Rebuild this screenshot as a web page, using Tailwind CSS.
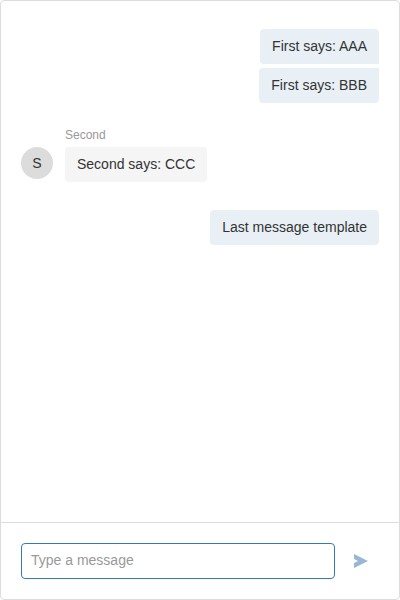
<!DOCTYPE html>
<html lang="en">
<head>
<meta charset="utf-8">
<title>Chat</title>
<script src="https://cdn.jsdelivr.net/npm/@tailwindcss/browser@4"></script>
</head>
<body class="bg-white">
<main class="flex h-[600px] w-[400px] flex-col overflow-hidden rounded border border-[#dcdcdc] bg-white font-['Liberation_Sans',Arial,sans-serif] text-sm leading-[19px] text-[#333]">
  <section class="flex flex-1 flex-col px-5 pt-7">
    <div class="flex flex-col items-end gap-1">
      <div class="rounded-l rounded-tr bg-[#e8f0f6] px-3 py-2">First says: AAA</div>
      <div class="rounded-l rounded-br bg-[#e8f0f6] px-3 py-2">First says: BBB</div>
    </div>
    <div class="mt-6 flex items-end gap-3">
      <div class="mb-[3px] flex size-8 items-center justify-center rounded-full bg-[#dcdcdc]">S</div>
      <div class="flex flex-col items-start">
        <div class="mb-[3px] text-xs leading-[17px] text-[#999]">Second</div>
        <div class="rounded bg-[#f5f5f5] px-3 py-2">Second says: CCC</div>
      </div>
    </div>
    <div class="mt-7 flex justify-end">
      <div class="rounded bg-[#e8f0f6] px-3 py-2">Last message template</div>
    </div>
  </section>
  <form class="flex h-[77px] shrink-0 items-center gap-2.5 border-t border-[#dcdcdc] px-5">
    <input type="text" placeholder="Type a message" class="h-9 w-[314px] rounded border border-[#337ab7] px-[9px] pb-[2px] outline-none placeholder:text-[#999]">
    <button type="button" aria-label="Send" class="flex size-8 items-center justify-center">
      <svg class="size-4" viewBox="0 0 16 16" fill="#98b7d3"><path d="M1 1l14 7-14 7V10L5 8 1 6z"/></svg>
    </button>
  </form>
</main>
</body>
</html>
